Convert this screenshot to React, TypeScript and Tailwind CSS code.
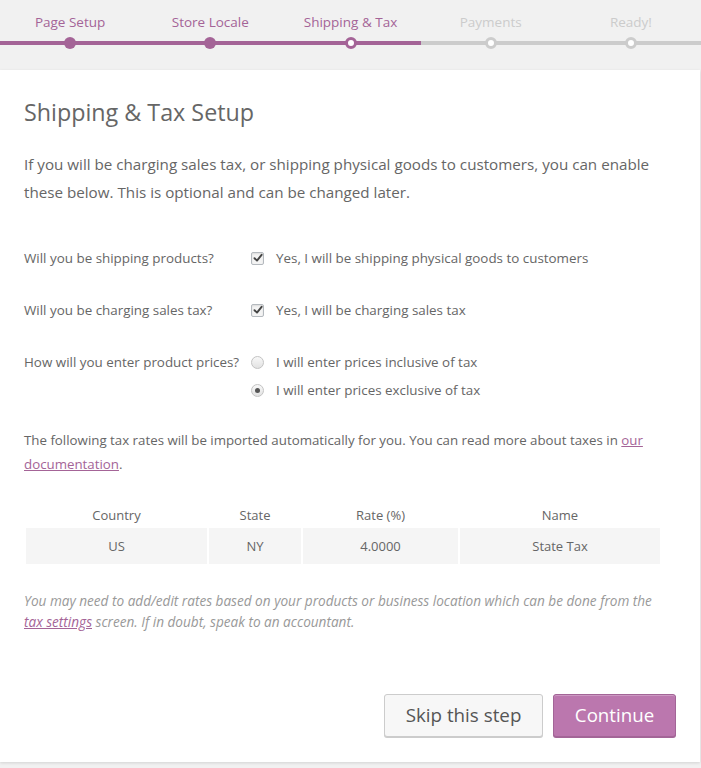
import React from "react";

const FONT = { fontFamily: '"Open Sans", "Noto Sans", sans-serif' };

type StepState = "done" | "active" | "todo";
const steps: { label: string; state: StepState }[] = [
  { label: "Page Setup", state: "done" },
  { label: "Store Locale", state: "done" },
  { label: "Shipping & Tax", state: "active" },
  { label: "Payments", state: "todo" },
  { label: "Ready!", state: "todo" },
];

function Dot({ state }: { state: StepState }) {
  if (state === "done") {
    return <div className="h-[12px] w-[12px] rounded-full bg-[#a46497]" />;
  }
  if (state === "active") {
    return <div className="h-[12px] w-[12px] rounded-full border-[3px] border-[#a46497] bg-white" />;
  }
  return <div className="h-[12px] w-[12px] rounded-full border-[3px] border-[#cccccc] bg-white" />;
}

function Checkbox() {
  return (
    <div className="flex h-[13px] w-[13px] items-center justify-center rounded-[2px] border border-[#b4b9be] bg-[#f4f4f4] shadow-[inset_0_1px_2px_rgba(0,0,0,0.1)]">
      <svg width="10" height="10" viewBox="0 0 10 10">
        <path d="M1.5 5.2 L4 7.6 L8.6 1.8" fill="none" stroke="#444" strokeWidth="1.9" strokeLinecap="round" strokeLinejoin="round" />
      </svg>
    </div>
  );
}

function Radio({ checked }: { checked?: boolean }) {
  return (
    <div className="flex h-[13px] w-[13px] items-center justify-center rounded-full border border-[#c3c3c3] bg-gradient-to-b from-[#f8f8f8] to-[#e2e2e2]">
      {checked && <div className="h-[5px] w-[5px] rounded-full bg-[#555]" />}
    </div>
  );
}

export default function App() {
  return (
    <div className="min-h-[768px] bg-[#f1f1f1] text-[#666]" style={FONT}>
      {/* Progress */}
      <div className="flex h-[70px] w-[701px]">
        {steps.map((s, i) => (
          <div key={i} className="flex flex-1 flex-col items-center">
            <div
              className={
                "mt-[12px] h-[20px] text-[13.5px] leading-[20px] " +
                (s.state === "todo" ? "text-[#cccccc]" : "text-[#a46497]")
              }
            >
              {s.label}
            </div>
            <div className="relative mt-[5px] flex h-[12px] w-full items-center justify-center">
              <div
                className={
                  "absolute left-0 right-0 top-[4px] h-[4px] " +
                  (s.state === "todo" ? "bg-[#cccccc]" : "bg-[#a46497]")
                }
              />
              <div className="relative">
                <Dot state={s.state} />
              </div>
            </div>
          </div>
        ))}
      </div>

      {/* Card */}
      <div className="w-[700px] bg-white px-6 pt-[27px] pb-[25px] shadow-[0_1px_3px_rgba(0,0,0,0.13)]">
        <h1 className="text-[23.3px] leading-[30px] text-[#666]">Shipping &amp; Tax Setup</h1>
        <p className="mt-[23px] text-[15.2px] leading-[28px] text-[#666]">
          If you will be charging sales tax, or shipping physical goods to customers, you can enable
          these below. This is optional and can be changed later.
        </p>

        <div className="mt-[42px] text-[13.4px] leading-[20px] text-[#666]">
          <div className="flex">
            <div className="w-[227px]">Will you be shipping products?</div>
            <div className="flex items-center">
              <Checkbox />
              <span className="ml-[12px]">Yes, I will be shipping physical goods to customers</span>
            </div>
          </div>
          <div className="mt-[32px] flex">
            <div className="w-[227px]">Will you be charging sales tax?</div>
            <div className="flex items-center">
              <Checkbox />
              <span className="ml-[12px]">Yes, I will be charging sales tax</span>
            </div>
          </div>
          <div className="mt-[32px] flex">
            <div className="w-[227px]">How will you enter product prices?</div>
            <div className="flex flex-col gap-[8px]">
              <div className="flex items-center">
                <Radio />
                <span className="ml-[12px]">I will enter prices inclusive of tax</span>
              </div>
              <div className="flex items-center">
                <Radio checked />
                <span className="ml-[12px]">I will enter prices exclusive of tax</span>
              </div>
            </div>
          </div>
        </div>

        <p className="mt-[28px] text-[13.3px] leading-[24px] text-[#666]">
          The following tax rates will be imported automatically for you. You can read more about taxes in{" "}
          <a className="text-[#a46497] underline">our documentation</a>.
        </p>

        <div className="ml-[2px] mt-[27px] w-[634px] text-[13px] text-[#666]">
          <div className="grid grid-cols-[181px_92px_155px_200px] gap-x-[2px]">
            <div className="h-[24px] text-center leading-[24px]">Country</div>
            <div className="h-[24px] text-center leading-[24px]">State</div>
            <div className="h-[24px] text-center leading-[24px]">Rate (%)</div>
            <div className="h-[24px] text-center leading-[24px]">Name</div>
          </div>
          <div className="mt-[1px] grid grid-cols-[181px_92px_155px_200px] gap-x-[2px]">
            <div className="h-[36px] bg-[#f5f5f5] text-center leading-[36px]">US</div>
            <div className="h-[36px] bg-[#f5f5f5] text-center leading-[36px]">NY</div>
            <div className="h-[36px] bg-[#f5f5f5] text-center leading-[36px]">4.0000</div>
            <div className="h-[36px] bg-[#f5f5f5] text-center leading-[36px]">State Tax</div>
          </div>
        </div>

        <p className="mt-[26px] max-w-[636px] text-[13.6px] italic leading-[21px] text-[#999]">
          You may need to add/edit rates based on your products or business location which can be done from the{" "}
          <a className="text-[#a46497] underline">tax settings</a> screen. If in doubt, speak to an accountant.
        </p>

        <div className="mt-[62px] flex justify-end gap-[10px]">
          <button className="h-[43px] w-[159px] rounded-[3px] border border-[#cccccc] bg-[#f7f7f7] text-[18.8px] text-[#555] shadow-[0_1px_0_#cccccc]">
            Skip this step
          </button>
          <button className="h-[43px] w-[123px] rounded-[3px] border border-[#a36597] bg-[#bb77ae] text-[18.7px] text-white shadow-[inset_0_1px_0_rgba(255,255,255,0.25),0_1px_0_#a36597]">
            Continue
          </button>
        </div>
      </div>
    </div>
  );
}
